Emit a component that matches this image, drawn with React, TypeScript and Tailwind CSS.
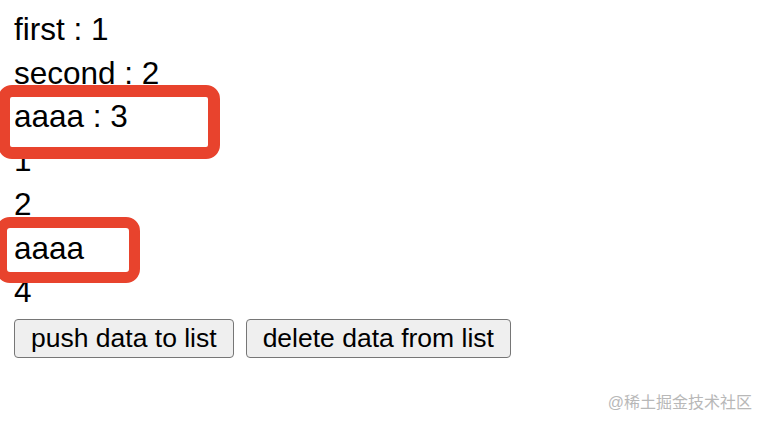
import { useState } from "react";

const initial = [
  { key: "first", value: 1 },
  { key: "second", value: 2 },
  { key: "aaaa", value: 3 },
];

export default function App() {
  const [list, setList] = useState<string[]>(["1", "2", "aaaa", "4"]);

  return (
    <div
      className="relative w-[768px] h-[426px] bg-white overflow-hidden text-black"
      style={{ fontFamily: '"Liberation Sans", Arial, sans-serif' }}
    >
      <div className="pl-[14px] pt-[8px] text-[31.5px] leading-[43.7px]">
        {initial.map((item) => (
          <div key={item.key}>
            {item.key} : {item.value}
          </div>
        ))}
        {list.map((item, i) => (
          <div key={i}>{item}</div>
        ))}
        <div className="flex gap-[12px] mt-[5px]">
          <button
            onClick={() => setList([...list, String(list.length + 1)])}
            className="h-[39px] px-[16px] text-[26.5px] leading-none bg-[#efefef] border-[1.5px] border-[#767676] rounded-[4px]"
          >
            push data to list
          </button>
          <button
            onClick={() => setList(list.slice(0, -1))}
            className="h-[39px] px-[16px] text-[26.5px] leading-none bg-[#efefef] border-[1.5px] border-[#767676] rounded-[4px]"
          >
            delete data from list
          </button>
        </div>
      </div>

      {/* annotation boxes */}
      <div className="absolute left-[-2px] top-[85px] w-[222px] h-[74px] border-[12px] border-[#e8432d] rounded-[14px]" />
      <div className="absolute left-[-4px] top-[217px] w-[144px] h-[66px] border-[11px] border-[#e8432d] rounded-[14px]" />

      <div
        className="absolute right-[16px] top-[391px] text-[16px] text-[#b8b8b8]"
        style={{ fontFamily: '"Liberation Sans", "Noto Sans CJK SC", sans-serif' }}
      >
        @稀土掘金技术社区
      </div>
    </div>
  );
}
